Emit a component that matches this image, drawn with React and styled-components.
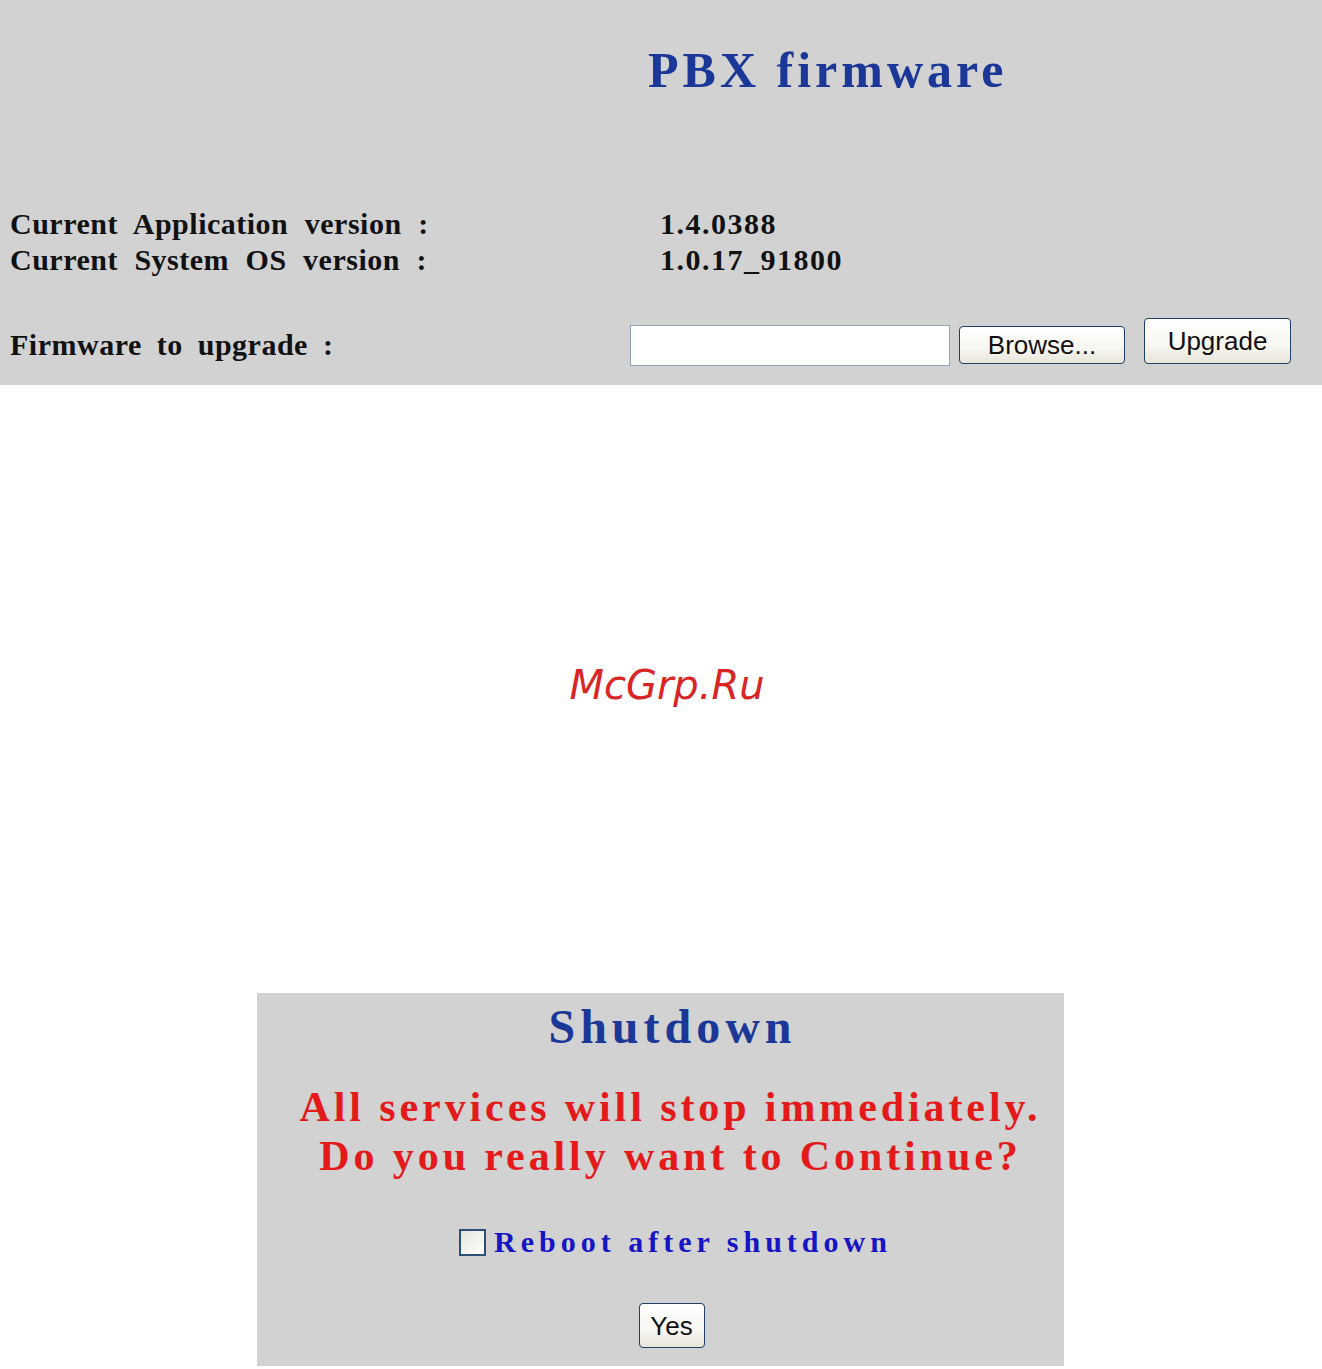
import React from "react";
import styled, { createGlobalStyle } from "styled-components";

const GlobalStyle = createGlobalStyle`
  html, body {
    margin: 0;
    padding: 0;
    background: #ffffff;
  }
  body {
    font-family: "Liberation Serif", "Times New Roman", serif;
  }
`;

const App = () => {
  return (
    <Page>
      <GlobalStyle />
      <FirmwarePanel>
        <PageTitle>PBX firmware</PageTitle>
        <InfoTable>
          <Label>Current Application version :</Label>
          <Value>1.4.0388</Value>
          <Label>Current System OS version :</Label>
          <Value>1.0.17_91800</Value>
        </InfoTable>
        <UpgradeRow>
          <RowLabel>Firmware to upgrade :</RowLabel>
          <Controls>
            <FileInput type="text" readOnly />
            <XpButton $w={166} $h={38}>Browse...</XpButton>
            <XpButton $w={147} $h={46} $lift>Upgrade</XpButton>
          </Controls>
        </UpgradeRow>
      </FirmwarePanel>

      <Gap>
        <Watermark>McGrp.Ru</Watermark>
      </Gap>

      <ShutdownPanel>
        <DialogTitle>Shutdown</DialogTitle>
        <Warning>
          All services will stop immediately.
          <br />
          Do you really want to Continue?
        </Warning>
        <CheckRow>
          <Check type="checkbox" />
          <CheckText>Reboot after shutdown</CheckText>
        </CheckRow>
        <ButtonRow>
          <XpButton $w={66} $h={45}>Yes</XpButton>
        </ButtonRow>
      </ShutdownPanel>
    </Page>
  );
};

export default App;

const Page = styled.div`
  width: 1322px;
  min-height: 1369px;
  background: #ffffff;
`;

const FirmwarePanel = styled.div`
  background: #d2d2d2;
  height: 385px;
  box-sizing: border-box;
  padding: 40px 0 0 10px;
`;

const PageTitle = styled.div`
  margin-left: 638px;
  color: #1b3898;
  font-size: 50px;
  font-weight: bold;
  letter-spacing: 4px;
  line-height: 60px;
`;

const InfoTable = styled.div`
  display: grid;
  grid-template-columns: 650px auto;
  margin-top: 106px;
`;

const Label = styled.div`
  color: #111;
  font-size: 30px;
  font-weight: bold;
  letter-spacing: 0.5px;
  word-spacing: 8.5px;
  line-height: 36px;
  white-space: nowrap;
`;

const Value = styled(Label)`
  letter-spacing: 1.5px;
`;

const RowLabel = styled(Label)`
  word-spacing: 7px;
  padding-top: 6px;
`;

const UpgradeRow = styled.div`
  display: grid;
  grid-template-columns: 620px auto;
  align-items: center;
  margin-top: 40px;
  height: 48px;
`;

const Controls = styled.div`
  display: flex;
  align-items: center;
`;

const FileInput = styled.input`
  width: 320px;
  height: 41px;
  box-sizing: border-box;
  border: 1px solid #8fa4bd;
  background: #ffffff;
  margin: 7px 0 0 0;
  outline: none;
`;

const XpButton = styled.button`
  width: ${(p) => p.$w}px;
  height: ${(p) => p.$h}px;
  box-sizing: border-box;
  margin-left: ${(p) => (p.$lift ? 19 : 9)}px;
  margin-top: ${(p) => (p.$lift ? -2 : 6)}px;
  border: 1px solid #1f3f66;
  border-radius: 4px;
  background: linear-gradient(#ffffff 0%, #f7f6f1 60%, #e8e5d8 100%);
  color: #111;
  font-family: "Liberation Sans", Arial, sans-serif;
  font-size: 26px;
  padding: 0;
  line-height: 1;
  cursor: pointer;
`;

const Gap = styled.div`
  height: 608px;
  box-sizing: border-box;
  padding-top: 276px;
  text-align: center;
`;

const Watermark = styled.div`
  margin-left: 12px;
  color: #d82626;
  font-family: "DejaVu Sans", sans-serif;
  font-style: italic;
  font-size: 40px;
  line-height: 48px;
`;

const ShutdownPanel = styled.div`
  margin-left: 257px;
  width: 807px;
  height: 373px;
  box-sizing: border-box;
  background: #d2d2d2;
  padding-top: 6px;
  display: flex;
  flex-direction: column;
  align-items: center;
  text-align: center;
`;

const DialogTitle = styled.div`
  color: #1b3898;
  font-size: 48px;
  font-weight: bold;
  letter-spacing: 5px;
  line-height: 56px;
  margin-left: 24px;
`;

const Warning = styled.div`
  margin-top: 28px;
  margin-left: 20px;
  color: #e41a1a;
  font-size: 42px;
  font-weight: bold;
  letter-spacing: 3.9px;
  line-height: 49px;
`;

const CheckRow = styled.div`
  margin-top: 46px;
  display: flex;
  align-items: center;
  height: 30px;
  margin-left: 30px;
`;

const Check = styled.input`
  appearance: none;
  width: 27px;
  height: 27px;
  margin: 0 8px 0 0;
  box-sizing: border-box;
  border: 2px solid #2a4f78;
  background: linear-gradient(135deg, #e4e4dc, #ffffff);
`;

const CheckText = styled.span`
  color: #1515c4;
  font-size: 30px;
  font-weight: bold;
  letter-spacing: 5px;
  line-height: 30px;
`;

const ButtonRow = styled.div`
  margin-top: 40px;
  display: flex;
  justify-content: center;
  margin-left: 13px;
`;
